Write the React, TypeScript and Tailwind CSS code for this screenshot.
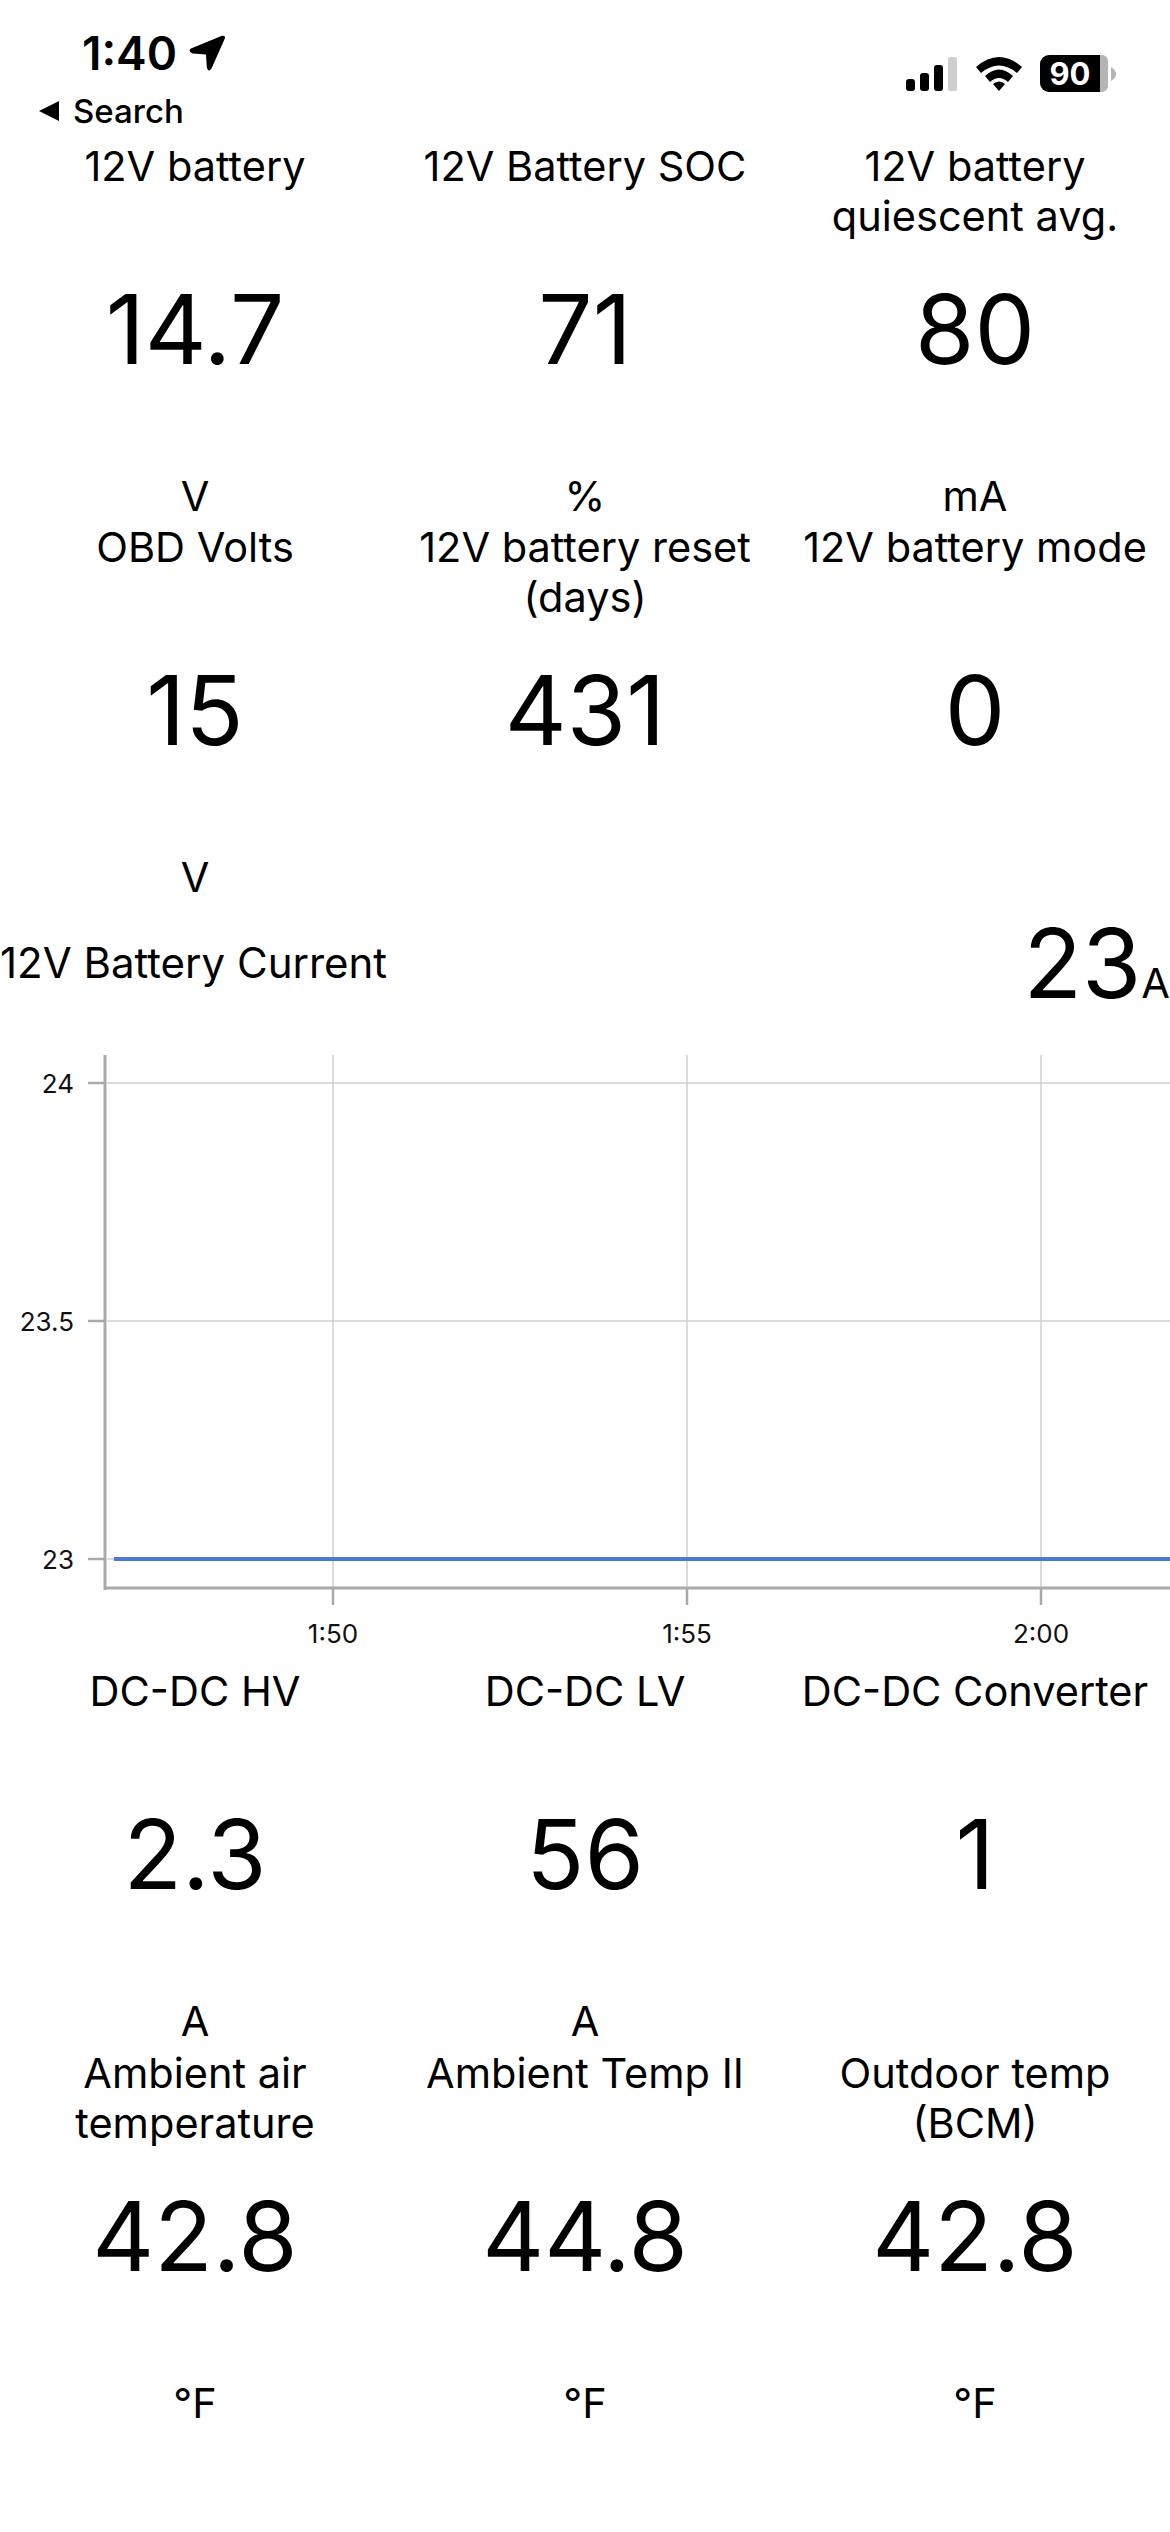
const topTiles = [
  { title: "12V battery", value: "14.7", unit: "V" },
  { title: "12V Battery SOC", value: "71", unit: "%" },
  { title: "12V battery quiescent avg.", value: "80", unit: "mA" },
  { title: "OBD Volts", value: "15", unit: "V" },
  { title: "12V battery reset (days)", value: "431", unit: "" },
  { title: "12V battery mode", value: "0", unit: "" },
];

const bottomTiles = [
  { title: "DC-DC HV", value: "2.3", unit: "A" },
  { title: "DC-DC LV", value: "56", unit: "A" },
  { title: "DC-DC Converter", value: "1", unit: "" },
  { title: "Ambient air temperature", value: "42.8", unit: "°F" },
  { title: "Ambient Temp II", value: "44.8", unit: "°F" },
  { title: "Outdoor temp (BCM)", value: "42.8", unit: "°F" },
];

function Tile({ title, value, unit }: { title: string; value: string; unit: string }) {
  return (
    <div className="flex h-[382px] flex-col items-center text-center text-black">
      <div className="h-[100px] w-full text-[41.5px] leading-[50px]">{title}</div>
      <div className="mt-[30px] h-[116px] text-[96px] leading-[116px]">{value}</div>
      <div className="mt-[84px] h-[50px] text-[41.5px] leading-[50px]">{unit}</div>
    </div>
  );
}

function StatusBar() {
  return (
    <div className="flex h-[141px] justify-between">
      <div className="flex flex-col">
        <div className="ml-[82px] mt-[29px] flex h-[48px] items-center gap-[12px]">
          <span className="text-[46px] font-semibold leading-[48px]">1:40</span>
          <svg width="37" height="37" viewBox="0 0 37 37">
            <path d="M33 .8 Q36.8 0 35.8 3.5 L22.5 33.5 Q19.5 38 17.8 32.5 L17 19.5 L3.5 18.5 Q-1.5 16 2 13.5 Z" fill="#000" />
          </svg>
        </div>
        <div className="ml-[38px] mt-[14px] flex h-[40px] items-center gap-[13px]">
          <svg width="22" height="22" viewBox="0 0 22 22">
            <path d="M21 1 V21 L1 11 Z" fill="#000" />
          </svg>
          <span className="text-[33px] font-medium leading-[40px]">Search</span>
        </div>
      </div>
      <div className="mr-[54px] mt-[55px] flex h-[37px] items-center">
        <svg width="52" height="36" viewBox="0 0 52 36">
          <rect x="0" y="23" width="9" height="12" rx="3" fill="#000" />
          <rect x="14" y="17" width="9" height="18" rx="3" fill="#000" />
          <rect x="28" y="9" width="9" height="26" rx="3" fill="#000" />
          <rect x="42" y="1" width="9" height="34" rx="2" fill="#cfcfcf" />
        </svg>
        <svg className="ml-[17px]" width="48" height="37" viewBox="0 0 48 37">
          <path d="M1 12 Q24 -8 47 12 L42 18 Q24 3 6 18 Z" fill="#000" />
          <path d="M10 21 Q24 8 38 21 L33 27 Q24 19 15 27 Z" fill="#000" />
          <path d="M18 29 Q24 24 30 29 L24 36 Z" fill="#000" />
        </svg>
        <div className="ml-[17px] flex h-[37px] w-[68px] items-center justify-center rounded-l-[9px] rounded-r-[6px] border-r-[8px] border-[#b5b5b5] bg-black">
          <span className="text-[31px] font-bold leading-none text-white">90</span>
        </div>
        <svg className="ml-[3px]" width="5" height="14" viewBox="0 0 5 14">
          <path d="M0 0 Q5 3 5 7 Q5 11 0 14 Z" fill="#b5b5b5" />
        </svg>
      </div>
    </div>
  );
}

function CurrentChart() {
  const axis = "#a9a9a9";
  const grid = "#cfcfd2";
  // svg origin sits at y=1053 of the page
  const yTicks = [
    { y: 30, label: "24" },
    { y: 268, label: "23.5" },
    { y: 506, label: "23" },
  ];
  const xTicks = [
    { x: 333, label: "1:50" },
    { x: 687, label: "1:55" },
    { x: 1041, label: "2:00" },
  ];
  return (
    <svg width="1170" height="613" viewBox="0 0 1170 613" className="block">
      {yTicks.map((t) => (
        <g key={t.label}>
          <line x1="107" x2="1170" y1={t.y} y2={t.y} stroke={grid} strokeWidth="1.5" />
          <line x1="88" x2="105" y1={t.y} y2={t.y} stroke={axis} strokeWidth="2.5" />
          <text x="74" y={t.y + 10} textAnchor="end" fontSize="26" fontFamily="Inter, sans-serif" fill="#111">
            {t.label}
          </text>
        </g>
      ))}
      {xTicks.map((t) => (
        <g key={t.label}>
          <line x1={t.x} x2={t.x} y1="2" y2="535" stroke={grid} strokeWidth="1.5" />
          <line x1={t.x} x2={t.x} y1="535" y2="552" stroke={axis} strokeWidth="2.5" />
          <text x={t.x} y="590" textAnchor="middle" fontSize="26" fontFamily="Inter, sans-serif" fill="#111">
            {t.label}
          </text>
        </g>
      ))}
      <line x1="105" x2="105" y1="2" y2="537" stroke={axis} strokeWidth="3" />
      <line x1="104" x2="1170" y1="535" y2="535" stroke={axis} strokeWidth="3" />
      <line x1="114" x2="1170" y1="506" y2="506" stroke="#4a7bd4" strokeWidth="4" />
    </svg>
  );
}

export default function App() {
  return (
    <div className="h-[2532px] w-full overflow-hidden bg-white font-['Inter',sans-serif] text-black">
      <StatusBar />
      <div className="grid grid-cols-3 [&>*]:h-[381px]">
        {topTiles.map((t) => (
          <Tile key={t.title} {...t} />
        ))}
      </div>
      <div className="mb-[30px] flex h-[120px] items-center justify-between">
        <span className="text-[42px] leading-[50px]">12V Battery Current</span>
        <span className="flex items-baseline">
          <span className="text-[96px] leading-[116px]">23</span>
          <span className="text-[41.5px] leading-[50px]">A</span>
        </span>
      </div>
      <CurrentChart />
      <div className="grid grid-cols-3">
        {bottomTiles.map((t) => (
          <Tile key={t.title} {...t} />
        ))}
      </div>
    </div>
  );
}
